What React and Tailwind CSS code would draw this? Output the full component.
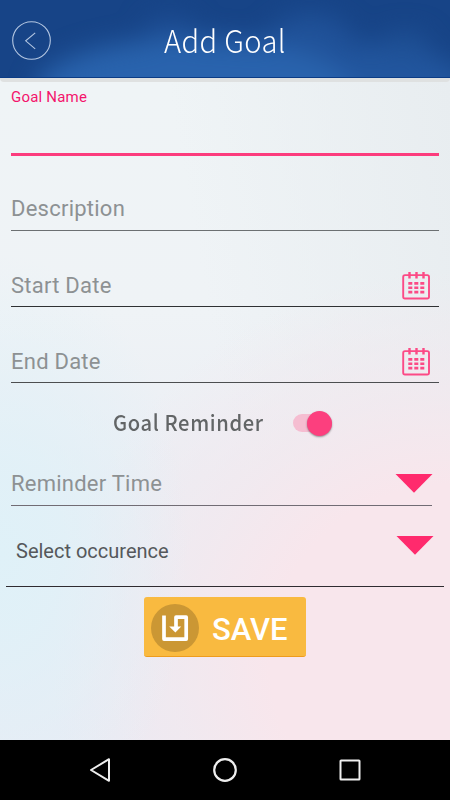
const PINK = '#fc4a86'

function CalendarIcon() {
  return (
    <svg width="30" height="30" viewBox="0 0 30 30" fill="none" stroke={PINK}>
      <rect x="2.2" y="4.1" width="25.8" height="23.4" rx="1.8" strokeWidth="1.9" />
      <path d="M8.5 1.1v6.4M15.5 1.1v6.4M22.5 1.1v6.4" strokeWidth="2.4" />
      <path d="M7.3 12.4h16.2M7.3 16.7h16.2M7.3 21.1h16.2" strokeWidth="2.6" strokeDasharray="4 2" />
    </svg>
  )
}

function Caret() {
  return (
    <svg width="38" height="21" viewBox="0 0 38 21">
      <path d="M0.5 1h37L19 19.8z" fill="#ff2a6d" />
    </svg>
  )
}

function SaveIcon() {
  return (
    <svg width="48" height="48" viewBox="0 0 48 48">
      <circle cx="24" cy="24" r="24" fill="#cb9734" />
      <path d="M13 11.6v23.5h22.2V13.2H25v11" fill="none" stroke="#fff" strokeWidth="3.7" strokeLinejoin="round" />
      <path d="M18.2 22.6h12L24.4 28.6z" fill="#fff" />
    </svg>
  )
}

// Underlined row: hint text on the left, optional icon on the right.
function Field({ label, className, children }) {
  return (
    <div className={'flex items-end justify-between border-b ' + className}>
      <span className="text-[22px] leading-7 tracking-[0.24px] text-[#8d9193]">{label}</span>
      {children}
    </div>
  )
}

function Header() {
  return (
    <header className="relative h-[78px] overflow-hidden border-b border-[#0b3c86] bg-[#174487]">
      <svg className="absolute inset-0" width="450" height="78" viewBox="0 0 450 78">
        <defs>
          <filter id="soft" filterUnits="userSpaceOnUse" x="-60" y="-60" width="570" height="260" colorInterpolationFilters="sRGB">
            <feGaussianBlur stdDeviation="13" />
          </filter>
        </defs>
        <g filter="url(#soft)">
          <ellipse cx="350" cy="90" rx="125" ry="46" fill="#22569e" />
          <ellipse cx="310" cy="50" rx="46" ry="36" fill="#205299" />
          <ellipse cx="405" cy="46" rx="24" ry="14" fill="#1f5196" />
          <ellipse cx="170" cy="28" rx="26" ry="12" fill="#1d4d93" />
          <ellipse cx="195" cy="92" rx="160" ry="54" fill="#2963ad" />
        </g>
      </svg>
      <div className="relative grid h-full grid-cols-[1fr_auto_1fr] items-center pl-[11px]">
        <svg width="41" height="41" viewBox="0 0 41 41" className="mt-1" fill="none" stroke="#b4c7e2">
          <circle cx="20.5" cy="20.5" r="18.8" strokeWidth="1.1" />
          <path d="M24.2 12.8l-9.5 8 9.5 8" strokeWidth="1.1" />
        </svg>
        <h1 className="mt-[2px] mr-[11px] scale-x-[0.94] font-['Noto_Sans_CJK_JP',sans-serif] text-[31px] leading-10 font-light tracking-[0.4px] text-white">
          Add Goal
        </h1>
      </div>
    </header>
  )
}

function NavBar() {
  return (
    <nav className="flex h-[60px] items-center justify-between bg-black pr-[88px] pl-[88px]">
      <svg width="24" height="26" viewBox="0 0 24 26" fill="none" stroke="#eee" strokeWidth="2" strokeLinejoin="round">
        <path d="M21 2.2v21.6L3 13z" />
      </svg>
      <svg width="26" height="26" viewBox="0 0 26 26" fill="none" stroke="#eee" strokeWidth="2.2">
        <circle cx="13" cy="13" r="10.8" />
      </svg>
      <svg width="24" height="24" viewBox="0 0 24 24" fill="none" stroke="#eee" strokeWidth="2">
        <rect x="2.5" y="2.5" width="19" height="19" rx="0.6" />
      </svg>
    </nav>
  )
}

export default function App() {
  return (
    <div className="flex h-[800px] w-[450px] flex-col overflow-hidden font-[Roboto,sans-serif]">
      <Header />
      <main className="flex-1 bg-[radial-gradient(ellipse_190px_300px_at_0%_72%,#dff1f8_0%,#dff1f8cc_30%,#e9ecf400_100%),radial-gradient(ellipse_400px_390px_at_100%_88%,#f8e6ec_0%,#f8e6ec_45%,#f3e8eebb_68%,#ebeaf200_100%),linear-gradient(260deg,#e8edf0_0%,#eef2f500_50%),linear-gradient(180deg,#eff4f6_0%,#eff3f6_35%,#ebeef4_60%,#e9ebf4_100%)]">
        <div className="-mb-1 h-1 rounded-b bg-[#dfe1e1]" />
        <div className="mx-[11px] h-[78px] border-b-[3px] border-[#fc3c7d] pt-[9px]">
          <span className="block text-[15px] leading-5 tracking-[0.2px] text-[#f4146c]">Goal Name</span>
        </div>
        <Field label="Description" className="mx-[11px] h-[75px] border-[#6c7072] pb-[7px]" />
        <Field label="Start Date" className="mx-[11px] h-[76px] border-[#2f3133] pb-[6px]">
          <span className="mr-[8px] -mb-px"><CalendarIcon /></span>
        </Field>
        <Field label="End Date" className="mx-[11px] h-[76px] border-[#4c4e50] pb-[6px]">
          <span className="mr-[8px] -mb-px"><CalendarIcon /></span>
        </Field>
        <div className="flex h-20 items-center pl-[113px]">
          <span className="mb-[5px] w-[180px] origin-left scale-x-[0.915] font-['Noto_Sans_CJK_JP',sans-serif] text-[22px] leading-7 font-medium tracking-[0.7px] text-[#626566]">
            Goal Reminder
          </span>
          <span className="flex h-[18px] w-[39px] items-center justify-end rounded-full bg-[#f5bdd1]">
            <span className="size-[25px] rounded-full bg-[#fc3f7e] shadow-[0_1px_2px_#0006]" />
          </span>
        </div>
        <Field label="Reminder Time" className="mr-[18px] ml-[11px] h-[43px] border-[#716c74] pb-[7px]">
          <span className="-mr-px mb-[4px]"><Caret /></span>
        </Field>
        <div className="mx-[6px] flex h-[81px] items-start justify-between border-b border-[#2f2b30] pr-[10px] pl-[10px]">
          <span className="pt-[31px] text-[20px] leading-7 text-[#55585b]">Select occurence</span>
          <span className="pt-[29px]"><Caret /></span>
        </div>
        <button
          type="button"
          className="mx-auto mt-[10px] flex h-[60px] w-[162px] items-center rounded-[3px] border-b border-[#ee9c1d] bg-[#f9ba40] pt-[3px] pl-[7px]"
        >
          <SaveIcon />
          <span className="mt-[3px] ml-[13px] text-[31px] leading-9 font-medium text-white">SAVE</span>
        </button>
      </main>
      <NavBar />
    </div>
  )
}
